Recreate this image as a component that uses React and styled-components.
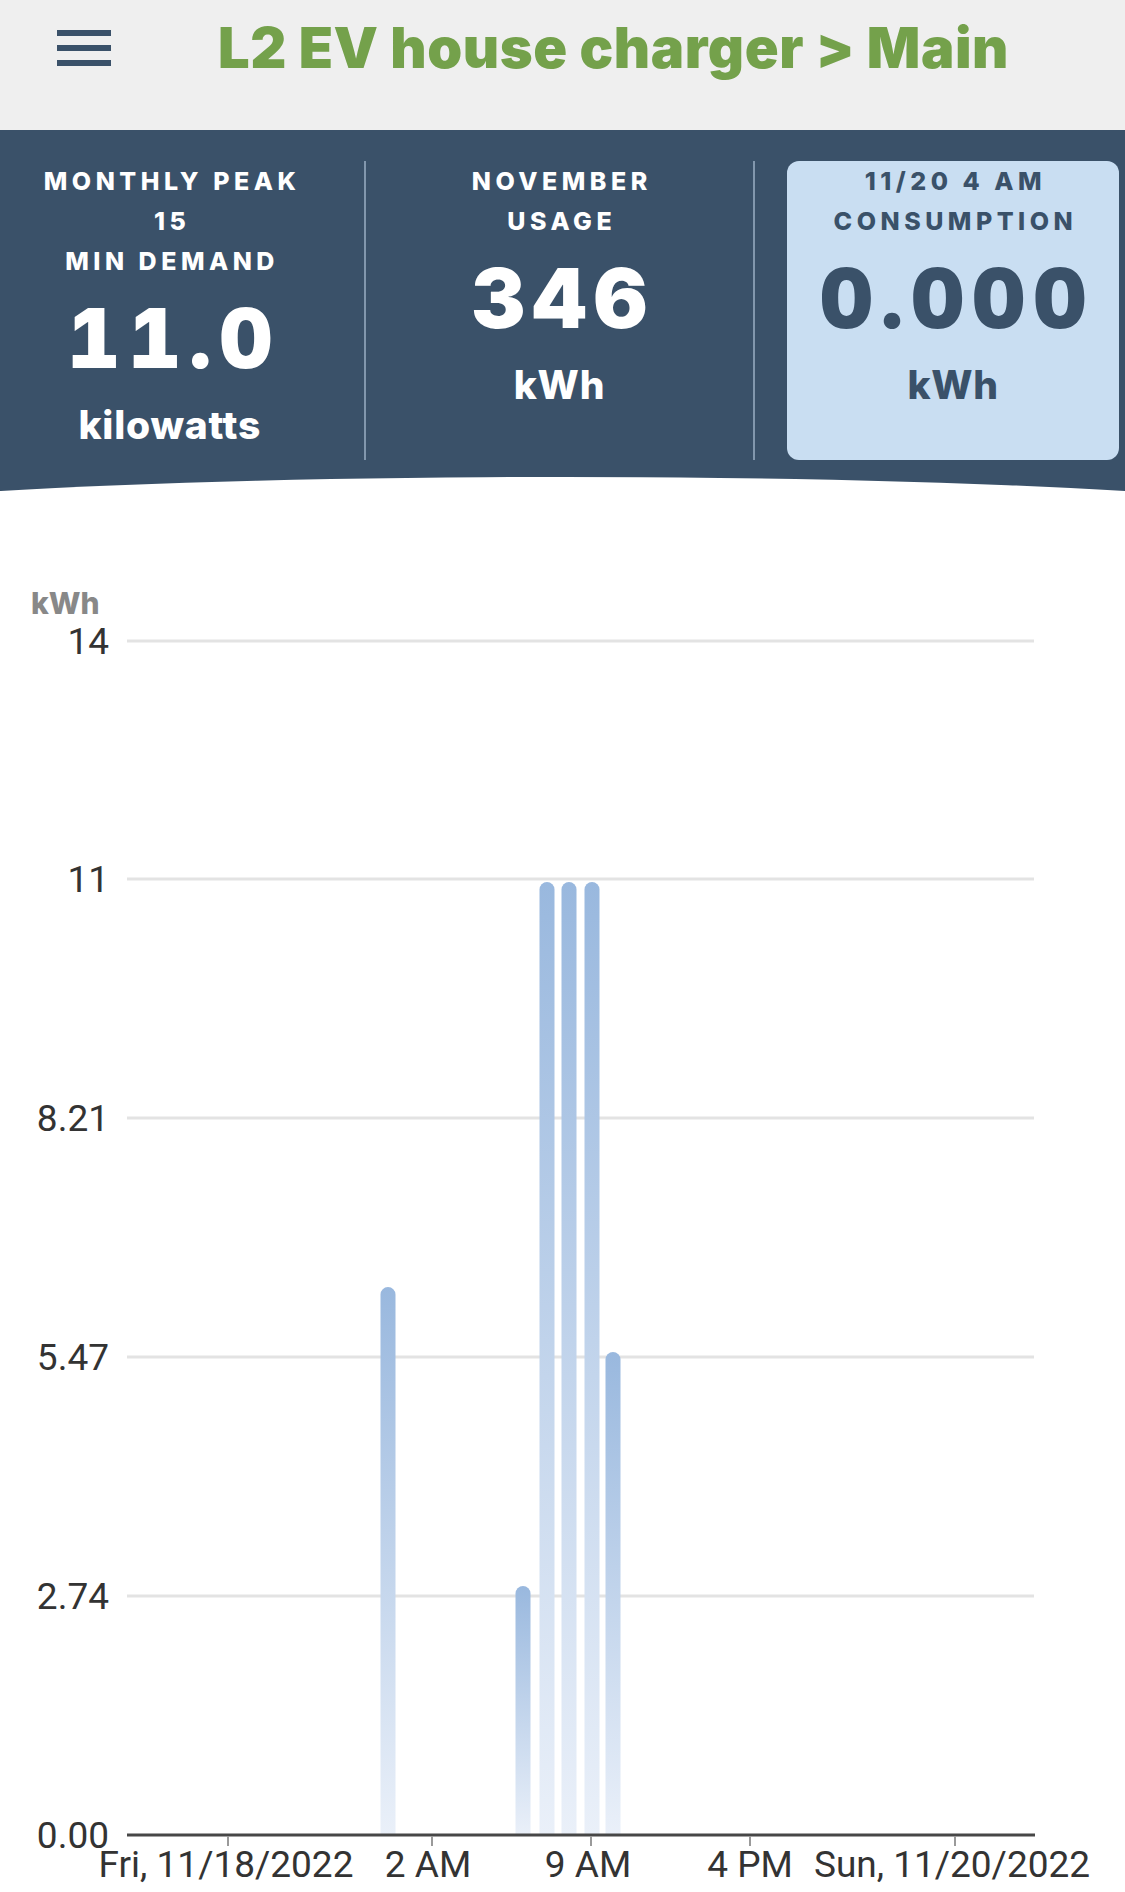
import React from "react";
import styled, { createGlobalStyle } from "styled-components";

const GlobalStyle = createGlobalStyle`
  body {
    margin: 0;
    background: #ffffff;
    font-family: "Inter", "Liberation Sans", sans-serif;
  }
`;

const stats = [
  { label: ["MONTHLY PEAK", "15", "MIN DEMAND"], value: "11.0", unit: "kilowatts" },
  { label: ["NOVEMBER", "USAGE"], value: "346", unit: "kWh" },
  { label: ["11/20 4 AM", "CONSUMPTION"], value: "0.000", unit: "kWh", active: true },
];

const yTicks = [
  { label: "14", y: 641 },
  { label: "11", y: 879 },
  { label: "8.21", y: 1118 },
  { label: "5.47", y: 1357 },
  { label: "2.74", y: 1596 },
];

const xTicks = [
  { label: "Fri, 11/18/2022", x: 228, tx: 226 },
  { label: "2 AM", x: 432, tx: 428 },
  { label: "9 AM", x: 591, tx: 588 },
  { label: "4 PM", x: 750, tx: 750 },
  { label: "Sun, 11/20/2022", x: 955, tx: 952 },
];

const bars = [
  { x: 388, top: 1287 },
  { x: 523, top: 1586 },
  { x: 547, top: 882 },
  { x: 569, top: 882 },
  { x: 592, top: 882 },
  { x: 613, top: 1352 },
];

const AXIS_Y = 1835;
const BAR_W = 15;

const barPath = (cx, top) => {
  const r = BAR_W / 2;
  const x0 = cx - r;
  const x1 = cx + r;
  return `M ${x0} ${AXIS_Y} V ${top + r} A ${r} ${r} 0 0 1 ${x1} ${top + r} V ${AXIS_Y} Z`;
};

const App = () => {
  return (
    <Page>
      <GlobalStyle />
      <Header>
        <Burger aria-label="menu">
          <span />
          <span />
          <span />
        </Burger>
        <Title>L2 EV house charger &gt; Main</Title>
      </Header>

      <Panel>
        <Stats>
          {stats.map((s, i) => (
            <React.Fragment key={s.value}>
              {i > 0 && <Divider />}
              <Stat $active={s.active}>
                {s.label.map((l) => (
                  <Label key={l}>{l}</Label>
                ))}
                <Value>{s.value}</Value>
                <Unit>{s.unit}</Unit>
              </Stat>
            </React.Fragment>
          ))}
        </Stats>
      </Panel>

      <Chart viewBox="0 491 1125 1401" width="1125" height="1401">
        <defs>
          <linearGradient id="barFill" x1="0" y1="0" x2="0" y2="1">
            <stop offset="0" stopColor="#99b8de" />
            <stop offset="1" stopColor="#eaf0f9" />
          </linearGradient>
        </defs>

        <AxisTitle x="31" y="614">kWh</AxisTitle>

        {yTicks.map((t) => (
          <g key={t.label}>
            <line x1="127" x2="1034" y1={t.y} y2={t.y} stroke="#e3e3e3" strokeWidth="3" />
            <TickText x="109" y={t.y + 13} textAnchor="end">
              {t.label}
            </TickText>
          </g>
        ))}

        {bars.map((b) => (
          <path key={b.x} d={barPath(b.x, b.top)} fill="url(#barFill)" />
        ))}

        <line x1="127" x2="1035" y1={AXIS_Y} y2={AXIS_Y} stroke="#474747" strokeWidth="3" />
        <TickText x="109" y={AXIS_Y + 13} textAnchor="end">
          0.00
        </TickText>

        {xTicks.map((t) => (
          <g key={t.label}>
            <line x1={t.x} x2={t.x} y1={AXIS_Y + 1} y2={AXIS_Y + 11} stroke="#9a9a9a" strokeWidth="2" />
            <TickText x={t.tx} y="1877" textAnchor="middle">
              {t.label}
            </TickText>
          </g>
        ))}
      </Chart>
    </Page>
  );
};

const Page = styled.div`
  width: 1125px;
  min-height: 1892px;
  background: #ffffff;
  overflow: hidden;
`;

const Header = styled.header`
  height: 130px;
  box-sizing: border-box;
  padding-bottom: 34px;
  background: #efefef;
  display: flex;
  align-items: center;
`;

const Burger = styled.div`
  margin-left: 57px;
  width: 54px;
  display: flex;
  flex-direction: column;
  gap: 9px;

  span {
    display: block;
    height: 6px;
    background: #3a5169;
  }
`;

const Title = styled.h1`
  margin: 0 0 0 107px;
  font-family: "Inter", "Liberation Sans", sans-serif;
  font-weight: 900;
  font-size: 56px;
  line-height: 1;
  letter-spacing: 0.01em;
  color: #74a14b;
  white-space: nowrap;
`;

const Panel = styled.section`
  position: relative;
  height: 361px;
  box-sizing: border-box;
  padding: 31px 6px 0 0;
  background: #3a5169;
  overflow: hidden;

  &::after {
    content: "";
    position: absolute;
    left: 50%;
    top: 347px;
    width: 1600px;
    height: 97px;
    margin-left: -800px;
    border-radius: 50%;
    background: #ffffff;
  }
`;

const Stats = styled.div`
  display: grid;
  grid-template-columns: 1fr 2px 1fr 2px 1fr;
  column-gap: 24px;
  height: 299px;
`;

const Divider = styled.div`
  background: rgba(190, 210, 230, 0.55);
  width: 2px;
`;

const Stat = styled.div`
  display: flex;
  flex-direction: column;
  align-items: center;
  text-align: center;
  border-radius: 12px;
  color: ${(p) => (p.$active ? "#3a5169" : "#ffffff")};
  background: ${(p) => (p.$active ? "#c9def2" : "transparent")};
  margin-left: ${(p) => (p.$active ? "8px" : "0")};
`;

const Label = styled.div`
  font-weight: 800;
  font-size: 25px;
  line-height: 40px;
  letter-spacing: 0.18em;
  margin-right: -0.18em;
  white-space: nowrap;
`;

const Value = styled.div`
  font-weight: 900;
  font-size: 82px;
  line-height: 116px;
  letter-spacing: 0.1em;
  margin-right: -0.1em;
  font-variant-numeric: tabular-nums;
  font-feature-settings: "tnum" 1;
`;

const Unit = styled.div`
  font-weight: 800;
  font-size: 39px;
  line-height: 56px;
  letter-spacing: 0.02em;
`;

const Chart = styled.svg`
  display: block;
`;

const AxisTitle = styled.text`
  font-family: "Inter", "Liberation Sans", sans-serif;
  font-weight: 800;
  font-size: 30px;
  fill: #888888;
`;

const TickText = styled.text`
  font-family: "Roboto", "Liberation Sans", sans-serif;
  font-size: 37px;
  fill: #333333;
`;

export default App;
